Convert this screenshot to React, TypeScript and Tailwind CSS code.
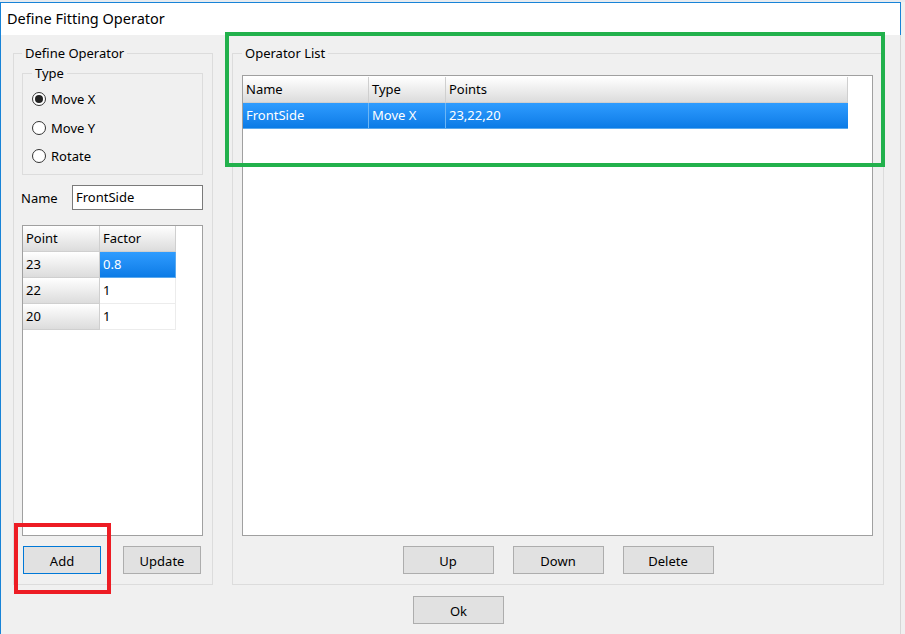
import React from 'react';

// 按钮
function Btn({ label, w, focused }: { label: string; w: string; focused?: boolean }) {
  return (
    <button
      className={`${w} h-[28px] bg-[#e1e1e1] border ${focused ? 'border-[#0078d7]' : 'border-[#adadad]'} text-[13px] text-black leading-none flex items-center justify-center pt-[2px]`}
    >
      {label}
    </button>
  );
}

function Radio({ label, checked }: { label: string; checked?: boolean }) {
  return (
    <div className="h-[28.5px] flex items-center">
      <span className="ml-[9px] w-[14px] h-[14px] rounded-full border border-[#333333] bg-white flex items-center justify-center">
        {checked && <span className="w-[8px] h-[8px] rounded-full bg-[#222222]"></span>}
      </span>
      <span className="ml-[5px] pt-[1px]">{label}</span>
    </div>
  );
}

const headerCell = 'bg-gradient-to-b from-[#ffffff] to-[#dcdcdc] border-r border-b border-[#cfcfcf] flex items-center px-[3px] pt-[1px]';

export default function App() {
  const points = [
    { point: '23', factor: '0.8', selected: true },
    { point: '22', factor: '1' },
    { point: '20', factor: '1' }
  ];

  return (
    <div className="w-[905px] h-[634px] bg-[#f0f0f0] overflow-hidden relative text-[13px] text-black font-['Noto_Sans','Open_Sans',sans-serif]">
      {/* 背景窗口的边缘 */}
      <div className="h-[2px] bg-[#e6ebf0]"></div>

      <div className="w-[901px] h-[632px] border-l border-t border-[#1883d7] flex flex-col">
        {/* 标题栏 */}
        <div className="h-[32px] bg-white border-r border-[#1883d7] flex items-center pl-[6px] text-[14.5px]">
          Define Fitting Operator
        </div>

        {/* 主体 */}
        <div className="flex-1 bg-[#f0f0f0] border-r border-[#d6d6d6] flex flex-col">
          <div className="flex pt-[10px] pl-[12px]">
            {/* Define Operator */}
            <fieldset className="w-[200px] h-[540px] border border-[#dcdcdc] p-0 m-0 flex flex-col">
              <legend className="ml-[8px] px-[3px] leading-[16px]">Define Operator</legend>

              <fieldset className="mt-[4px] ml-[8px] w-[181px] h-[110px] border border-[#dcdcdc] p-0 m-0">
                <legend className="ml-[9px] px-[3px] leading-[16px]">Type</legend>
                <div className="pt-[4px]">
                  <Radio label="Move X" checked />
                  <Radio label="Move Y" />
                  <Radio label="Rotate" />
                </div>
              </fieldset>

              <div className="mt-[10px] flex items-center">
                <span className="ml-[7px] w-[51px] pt-[2px]">Name</span>
                <div className="w-[131px] h-[25px] bg-white border border-[#7a7a7a] flex items-center px-[3px]">
                  FrontSide
                </div>
              </div>

              <div className="mt-[15px] ml-[8px] w-[181px] h-[311px] bg-white border border-[#a0a0a0]">
                <div className="flex h-[26px]">
                  <div className={`${headerCell} w-[77px]`}>Point</div>
                  <div className={`${headerCell} w-[76px]`}>Factor</div>
                </div>
                {points.map((p) => (
                  <div key={p.point} className="flex h-[26px]">
                    <div className={`${headerCell} w-[77px]`}>{p.point}</div>
                    <div
                      className={`w-[76px] flex items-center px-[3px] pt-[1px] border-r border-b ${
                        p.selected
                          ? 'bg-gradient-to-b from-[#2e9cff] to-[#0a7be6] border-[#5aa9ee] text-white'
                          : 'border-[#ececec]'
                      }`}
                    >
                      {p.factor}
                    </div>
                  </div>
                ))}
              </div>

              <div className="mt-[10px] flex">
                <div className="ml-[9px]">
                  <Btn label="Add" w="w-[78px]" focused />
                </div>
                <div className="ml-[22px]">
                  <Btn label="Update" w="w-[78px]" />
                </div>
              </div>
            </fieldset>

            {/* Operator List */}
            <fieldset className="ml-[19px] w-[652px] h-[540px] border border-[#dcdcdc] p-0 m-0 flex flex-col">
              <legend className="ml-[9px] px-[3px] leading-[16px]">Operator List</legend>

              <div className="mt-[14px] ml-[9px] w-[631px] h-[461px] bg-white border border-[#a0a0a0] pt-[1px]">
                <div className="flex h-[26px]">
                  <div className={`${headerCell} w-[126px]`}>Name</div>
                  <div className={`${headerCell} w-[77px]`}>Type</div>
                  <div className={`${headerCell} w-[402px]`}>Points</div>
                </div>
                <div className="flex h-[26px] w-[605px] bg-gradient-to-b from-[#2e9cff] to-[#0a7be6] text-white border-b border-[#5aa9ee]">
                  <div className="w-[126px] flex items-center px-[3px] pt-[1px] border-r border-[#6cb6f5]">FrontSide</div>
                  <div className="w-[77px] flex items-center px-[3px] pt-[1px] border-r border-[#6cb6f5]">Move X</div>
                  <div className="w-[402px] flex items-center px-[3px] pt-[1px]">23,22,20</div>
                </div>
              </div>

              <div className="mt-[10px] flex justify-center gap-[19px]">
                <Btn label="Up" w="w-[91px]" />
                <Btn label="Down" w="w-[91px]" />
                <Btn label="Delete" w="w-[91px]" />
              </div>
            </fieldset>
          </div>

          <div className="mt-[11px] pl-[412px]">
            <Btn label="Ok" w="w-[91px]" />
          </div>
        </div>
      </div>

      {/* 标注框 */}
      <div className="absolute left-[14px] top-[523px] w-[97px] h-[71px] border-4 border-[#ed1c24]"></div>
      <div className="absolute left-[225px] top-[32px] w-[660px] h-[135px] border-4 border-[#22b14c]"></div>
    </div>
  );
}
